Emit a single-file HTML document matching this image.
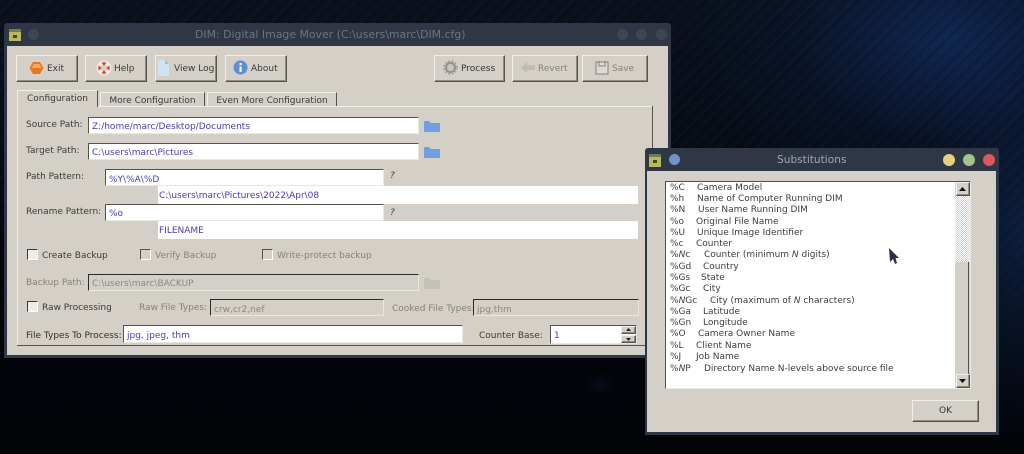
<!DOCTYPE html>
<html>
<head>
<meta charset="utf-8">
<style>
html,body{margin:0;padding:0;background:#03060c}
#s{position:relative;width:1024px;height:454px;overflow:hidden;font-family:"DejaVu Sans",sans-serif;font-size:9px;color:#3a3a38;filter:blur(.35px);
background:
 radial-gradient(ellipse 260px 170px at 950px 40px,rgba(16,42,88,.85),rgba(10,24,52,.45) 60%,transparent 100%),
 radial-gradient(ellipse 110px 210px at 1024px 230px,rgba(15,38,76,.75),transparent 100%),
 radial-gradient(ellipse 14px 12px at 600px 384px,rgba(14,30,62,.3),transparent 100%),
 linear-gradient(180deg,#0a111d 0,#080d18 25%,#03050b 62%,#020408 100%);}
#st{position:absolute;left:0;top:0;width:1024px;height:454px;background:repeating-linear-gradient(135deg,rgba(70,100,150,.08) 0 1px,transparent 1px 4px,rgba(0,0,0,.2) 4px 5px,transparent 5px 9px);-webkit-mask-image:linear-gradient(to bottom,#000 0,#000 40%,rgba(0,0,0,.12) 80%);mask-image:linear-gradient(to bottom,#000 0,#000 40%,rgba(0,0,0,.12) 80%)}
#s div,#s span.a,#s svg{position:absolute}
.t{white-space:pre;line-height:12px}
.win{background:#d4d0c8}
.bar{background:#2f3645}
.btn{background:#d4d0c8;border:1px solid;border-color:#f1efea #57544c #57544c #f1efea;box-shadow:inset -1px -1px 0 #8f8b82;box-sizing:border-box}
.in{background:#fff;box-sizing:border-box;border-top:1px solid #55524b;border-left:1px solid #55524b;border-right:1px solid #e9e7e1;border-bottom:1px solid #e9e7e1;color:#4a3cb0;padding:3px 0 0 3px;line-height:12px;white-space:pre;overflow:hidden}
.dis{background:#d4d0c8;color:#8b8880;border-top:1px solid #2b2a27;border-left:1px solid #2b2a27}
.ro{background:#fff;color:#4a3cb0;line-height:12px;white-space:pre;padding:4px 0 0 1px;box-sizing:border-box}
.cb{width:9px;height:9px;background:#ececea;border-top:1px solid #3c3a36;border-left:1px solid #3c3a36;border-right:1px solid #fff;border-bottom:1px solid #fff}
.cbd{background:#d4d0c8;border-color:#55524b #fff #fff #55524b}
.g{color:#85827a}
.tab{background:#d4d0c8;border-top:1px solid #f1efea;border-left:1px solid #f1efea;border-right:1px solid #55524b;box-sizing:border-box;text-align:center;line-height:14px;white-space:pre}
.l{color:#3c3c3a;font-size:9px;left:670px;width:280px;height:11px;white-space:pre;line-height:11px}
.l span{position:absolute;top:0}
</style>
</head>
<body>
<div id="s">
<div id="st"></div>

<!-- MAIN WINDOW -->
<div class="bar" style="left:4px;top:23px;width:667px;height:335px;border-radius:3px 3px 0 0"></div>
<div class="win" style="left:7px;top:46px;width:661px;height:309px"></div>
<div style="left:9px;top:29px;width:12px;height:12px;background:#b9b85c;border-top:3px solid #6f7a58;box-sizing:border-box"></div>
<div style="left:13px;top:35px;width:4px;height:3px;background:#3d4a20"></div>
<div style="left:28px;top:29px;width:11px;height:11px;border-radius:50%;background:#3e4656"></div>
<div class="t" style="left:195px;top:29px;color:#6d7585;font-size:10.9px;">DIM: Digital Image Mover (C:\users\marc\DIM.cfg)</div>
<div style="left:617px;top:29px;width:11px;height:11px;border-radius:50%;background:#3e4656"></div>
<div style="left:636px;top:29px;width:11px;height:11px;border-radius:50%;background:#3e4656"></div>
<div style="left:656px;top:29px;width:11px;height:11px;border-radius:50%;background:#3e4656"></div>

<!-- Toolbar -->
<div class="btn" style="left:16px;top:55px;width:62px;height:27px"></div>
<svg style="left:29px;top:61px" width="15" height="14" viewBox="0 0 15 14"><path d="M4 1h7l3.500 6-3.500 6H4L.5 7z" fill="#e8761c"/><path d="M4.500 3h6l2 4h-10z" fill="#f4a860"/></svg>
<div class="t" style="left:47px;top:63px">Exit</div>
<div class="btn" style="left:85px;top:55px;width:62px;height:27px"></div>
<svg style="left:96px;top:60px" width="16" height="16" viewBox="0 0 16 16"><circle cx="8" cy="8" r="5.500" fill="none" stroke="#f3ede6" stroke-width="3.500"/><path d="M5.500 2.800 8 5.600 10.500 2.800A6 6 0 0 0 5.500 2.800ZM5.500 13.200 8 10.400 10.500 13.200A6 6 0 0 1 5.500 13.200ZM2.800 5.500 5.600 8 2.800 10.500A6 6 0 0 1 2.800 5.500ZM13.200 5.500 10.400 8 13.200 10.500A6 6 0 0 0 13.200 5.500Z" fill="#d4452e"/></svg>
<div class="t" style="left:114px;top:63px">Help</div>
<div class="btn" style="left:155px;top:55px;width:62px;height:27px"></div>
<svg style="left:157px;top:60px" width="13" height="16" viewBox="0 0 13 16"><path d="M1 0h7l4 4v12H1z" fill="#cfe4f2"/><path d="M8 0l4 4H8z" fill="#8fc0e2"/></svg>
<div class="t" style="left:174px;top:63px">View Log</div>
<div class="btn" style="left:225px;top:55px;width:62px;height:27px"></div>
<svg style="left:233px;top:60px" width="15" height="15" viewBox="0 0 15 15"><circle cx="7.500" cy="7.500" r="7" fill="#5f8fcf"/><rect x="6.500" y="6.500" width="2.200" height="5.500" fill="#f1f4fa"/><rect x="6.500" y="3" width="2.200" height="2.200" fill="#f1f4fa"/></svg>
<div class="t" style="left:251px;top:63px">About</div>

<div class="btn" style="left:434px;top:55px;width:71px;height:27px"></div>
<svg style="left:443px;top:60px" width="15" height="15" viewBox="0 0 15 15"><circle cx="7.500" cy="7.500" r="4.600" fill="#c6c4bd" stroke="#8e8e8a" stroke-width="1.800"/><circle cx="7.500" cy="7.500" r="6.500" fill="none" stroke="#a5a49f" stroke-width="1.600" stroke-dasharray="2 1.500"/></svg>
<div class="t" style="left:461px;top:63px;color:#333">Process</div>
<div class="btn" style="left:512px;top:55px;width:66px;height:27px"></div>
<svg style="left:521px;top:62px" width="14" height="11" viewBox="0 0 14 11"><path d="M0 5.500 6 0v3h8v5H6v3z" fill="#bfbcb4"/></svg>
<div class="t g" style="left:538px;top:63px">Revert</div>
<div class="btn" style="left:582px;top:55px;width:66px;height:27px"></div>
<svg style="left:595px;top:60px" width="14" height="15" viewBox="0 0 14 15"><path d="M1 2h12v12H1z" fill="#dedbd4" stroke="#84817a"/><path d="M4 1v5h6V1" fill="none" stroke="#84817a"/></svg>
<div class="t g" style="left:612px;top:63px">Save</div>

<!-- Tabs & panel -->
<div style="left:17px;top:106px;width:636px;height:1px;background:#f1efea"></div>
<div style="left:652px;top:106px;width:1px;height:239px;background:#55524b"></div>
<div style="left:17px;top:106px;width:1px;height:239px;background:#f1efea"></div>
<div style="left:17px;top:345px;width:636px;height:1px;background:#55524b"></div>
<div class="tab" style="left:17px;top:90px;width:81px;height:17px;line-height:16px">Configuration</div>
<div class="tab" style="left:100px;top:92px;width:105px;height:14px;line-height:16px">More Configuration</div>
<div class="tab" style="left:207px;top:92px;width:130px;height:14px;line-height:16px">Even More Configuration</div>

<div class="t" style="left:26px;top:119px">Source Path:</div>
<div class="in" style="left:88px;top:117px;width:331px;height:17px">Z:/home/marc/Desktop/Documents</div>
<svg style="left:423px;top:120px" width="18" height="13" viewBox="0 0 18 13"><path d="M1 2q0-1 1-1h4l2 2h8q1 0 1 1v7q0 1-1 1H2q-1 0-1-1z" fill="#6f9fe0"/></svg>

<div class="t" style="left:26px;top:145px">Target Path:</div>
<div class="in" style="left:88px;top:143px;width:331px;height:17px">C:\users\marc\Pictures</div>
<svg style="left:423px;top:146px" width="18" height="13" viewBox="0 0 18 13"><path d="M1 2q0-1 1-1h4l2 2h8q1 0 1 1v7q0 1-1 1H2q-1 0-1-1z" fill="#6f9fe0"/></svg>

<div class="t" style="left:26px;top:171px">Path Pattern:</div>
<div class="in" style="left:105px;top:169px;width:279px;height:17px;padding-top:4px">%Y\%A\%D</div>
<div class="t" style="left:390px;top:170px;font-style:italic">?</div>
<div class="ro" style="left:158px;top:186px;width:480px;height:18px">C:\users\marc\Pictures\2022\Apr\08</div>

<div class="t" style="left:26px;top:206px">Rename Pattern:</div>
<div class="in" style="left:105px;top:204px;width:279px;height:17px">%o</div>
<div class="t" style="left:390px;top:207px;font-style:italic">?</div>
<div class="ro" style="left:158px;top:221px;width:480px;height:18px">FILENAME</div>

<div class="cb" style="left:27px;top:249px"></div>
<div class="t" style="left:42px;top:250px">Create Backup</div>
<div class="cb cbd" style="left:140px;top:249px"></div>
<div class="t g" style="left:155px;top:250px">Verify Backup</div>
<div class="cb cbd" style="left:262px;top:249px"></div>
<div class="t g" style="left:277px;top:250px">Write-protect backup</div>

<div class="t g" style="left:26px;top:277px">Backup Path:</div>
<div class="in dis" style="left:88px;top:274px;width:331px;height:17px">C:\users\marc\BACKUP</div>
<svg style="left:423px;top:277px" width="18" height="13" viewBox="0 0 18 13"><path d="M1 2q0-1 1-1h4l2 2h8q1 0 1 1v7q0 1-1 1H2q-1 0-1-1z" fill="#c4c1b9"/></svg>

<div class="cb" style="left:27px;top:301px"></div>
<div class="t" style="left:42px;top:302px">Raw Processing</div>
<div class="t g" style="left:139px;top:302px">Raw File Types:</div>
<div class="in dis" style="left:210px;top:299px;width:174px;height:17px;padding-top:4px">crw,cr2,nef</div>
<div class="t g" style="left:392px;top:303px">Cooked File Types:</div>
<div class="in dis" style="left:473px;top:299px;width:166px;height:17px;padding-top:4px">jpg,thm</div>

<div class="t" style="left:26px;top:330px;color:#2e2e2c">File Types To Process:</div>
<div class="in" style="left:123px;top:325px;width:340px;height:18px;padding-top:4px">jpg, jpeg, thm</div>
<div class="t" style="left:479px;top:330px">Counter Base:</div>
<div class="in" style="left:550px;top:325px;width:87px;height:19px;padding-top:4px">1</div>
<div class="btn" style="left:621px;top:326px;width:15px;height:8px"></div>
<div class="btn" style="left:621px;top:335px;width:15px;height:8px"></div>
<svg style="left:626px;top:328px" width="5" height="13" viewBox="0 0 5 13"><path d="M0 3 2.500 0 5 3zM0 10h5l-2.500 3z" fill="#222"/></svg>

<!-- SUBSTITUTIONS -->
<div class="bar" style="left:645px;top:148px;width:354px;height:287px;border-radius:3px 3px 0 0"></div>
<div class="win" style="left:647px;top:171px;width:349px;height:261px"></div>
<div style="left:649px;top:154px;width:12px;height:13px;background:#b9b85c;border-top:3px solid #6f7a58;box-sizing:border-box"></div>
<div style="left:653px;top:160px;width:4px;height:3px;background:#3d4a20"></div>
<div style="left:669px;top:154px;width:11px;height:11px;border-radius:50%;background:#6f95c8"></div>
<div class="t" style="left:777px;top:154px;color:#a3a8b0;font-size:10.6px">Substitutions</div>
<div style="left:943px;top:154px;width:12px;height:12px;border-radius:50%;background:#e8cf80"></div>
<div style="left:963px;top:154px;width:12px;height:12px;border-radius:50%;background:#a3c48e"></div>
<div style="left:983px;top:154px;width:12px;height:12px;border-radius:50%;background:#d9595e"></div>

<div style="left:665px;top:181px;width:306px;height:208px;background:#fff;box-sizing:border-box;border-left:1px solid #55524b;border-top:1px solid #55524b;border-right:1px solid #e9e7e1;border-bottom:1px solid #e9e7e1"></div>
<div style="left:955px;top:182px;width:15px;height:206px;background:#d4d0c8"></div>
<div style="left:955px;top:196px;width:15px;height:66px;background:repeating-conic-gradient(#fff 0 25%,#d4d0c8 0 50%) 0 0/2px 2px"></div>
<div class="btn" style="left:956px;top:182px;width:14px;height:14px"></div>
<svg style="left:959px;top:187px" width="7" height="4" viewBox="0 0 7 4"><path d="M0 4 3.500 0 7 4z" fill="#111"/></svg>
<div style="left:968px;top:262px;width:1px;height:112px;background:#55524b"></div>
<div class="btn" style="left:956px;top:374px;width:14px;height:14px"></div>
<svg style="left:959px;top:379px" width="7" height="4" viewBox="0 0 7 4"><path d="M0 0h7L3.500 4z" fill="#111"/></svg>

<div class="l" style="top:183px">%C<span style="left:27px">Camera Model</span></div>
<div class="l" style="top:194px">%h<span style="left:27px">Name of Computer Running DIM</span></div>
<div class="l" style="top:205px">%N<span style="left:28px">User Name Running DIM</span></div>
<div class="l" style="top:217px">%o<span style="left:26px">Original File Name</span></div>
<div class="l" style="top:228px">%U<span style="left:27px">Unique Image Identifier</span></div>
<div class="l" style="top:239px">%c<span style="left:26px">Counter</span></div>
<div class="l" style="top:250px">%<i>N</i>c<span style="left:34px">Counter (minimum <i>N</i> digits)</span></div>
<div class="l" style="top:262px">%Gd<span style="left:33px">Country</span></div>
<div class="l" style="top:273px">%Gs<span style="left:31px">State</span></div>
<div class="l" style="top:284px">%Gc<span style="left:33px">City</span></div>
<div class="l" style="top:296px">%<i>N</i>Gc<span style="left:40px">City (maximum of <i>N</i> characters)</span></div>
<div class="l" style="top:307px">%Ga<span style="left:33px">Latitude</span></div>
<div class="l" style="top:318px">%Gn<span style="left:33px">Longitude</span></div>
<div class="l" style="top:329px">%O<span style="left:28px">Camera Owner Name</span></div>
<div class="l" style="top:341px">%L<span style="left:26px">Client Name</span></div>
<div class="l" style="top:352px">%J<span style="left:26px">Job Name</span></div>
<div class="l" style="top:364px">%<i>N</i>P<span style="left:34px">Directory Name N-levels above source file</span></div>

<div class="btn" style="left:912px;top:400px;width:67px;height:22px;text-align:center;line-height:20px;color:#333">OK</div>

<!-- cursor -->
<svg style="left:889px;top:248px" width="11" height="17" viewBox="0 0 11 17"><path d="M0 0 10 10H6.500L8 15l-2 1-2-5-3 3z" fill="#2b3140"/></svg>
</div>
</body>
</html>
